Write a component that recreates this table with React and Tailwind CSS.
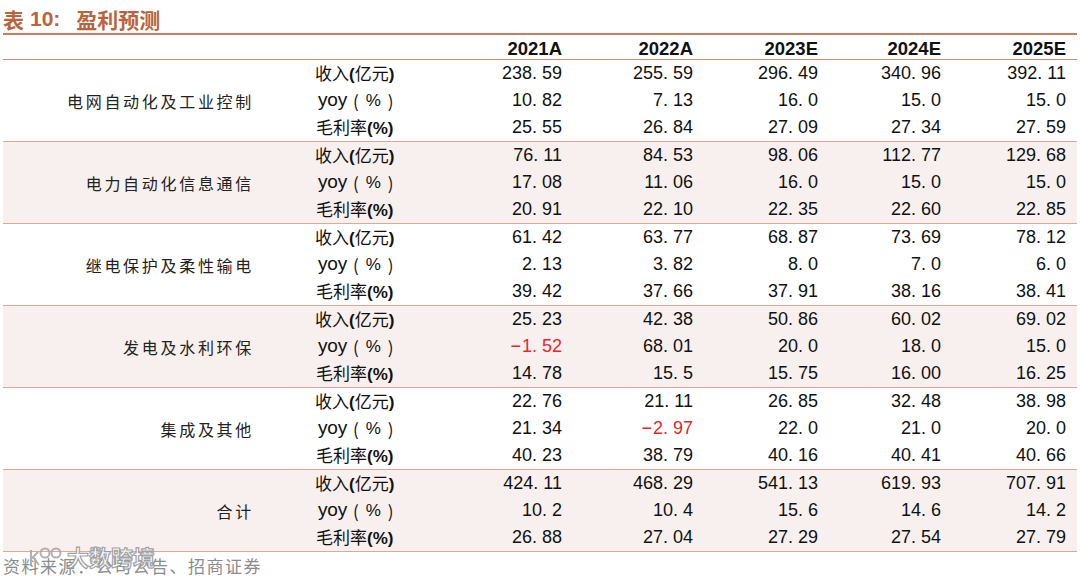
import React from "react";

const groups = [
  {
    name: "电网自动化及工业控制",
    shade: false,
    rows: [
      ["238.59", "255.59", "296.49", "340.96", "392.11"],
      ["10.82", "7.13", "16.0", "15.0", "15.0"],
      ["25.55", "26.84", "27.09", "27.34", "27.59"],
    ],
  },
  {
    name: "电力自动化信息通信",
    shade: true,
    rows: [
      ["76.11", "84.53", "98.06", "112.77", "129.68"],
      ["17.08", "11.06", "16.0", "15.0", "15.0"],
      ["20.91", "22.10", "22.35", "22.60", "22.85"],
    ],
  },
  {
    name: "继电保护及柔性输电",
    shade: false,
    rows: [
      ["61.42", "63.77", "68.87", "73.69", "78.12"],
      ["2.13", "3.82", "8.0", "7.0", "6.0"],
      ["39.42", "37.66", "37.91", "38.16", "38.41"],
    ],
  },
  {
    name: "发电及水利环保",
    shade: true,
    rows: [
      ["25.23", "42.38", "50.86", "60.02", "69.02"],
      ["-1.52", "68.01", "20.0", "18.0", "15.0"],
      ["14.78", "15.5", "15.75", "16.00", "16.25"],
    ],
  },
  {
    name: "集成及其他",
    shade: false,
    rows: [
      ["22.76", "21.11", "26.85", "32.48", "38.98"],
      ["21.34", "-2.97", "22.0", "21.0", "20.0"],
      ["40.23", "38.79", "40.16", "40.41", "40.66"],
    ],
  },
  {
    name: "合计",
    shade: true,
    rows: [
      ["424.11", "468.29", "541.13", "619.93", "707.91"],
      ["10.2", "10.4", "15.6", "14.6", "14.2"],
      ["26.88", "27.04", "27.29", "27.54", "27.79"],
    ],
  },
];

const years = ["2021A", "2022A", "2023E", "2024E", "2025E"];

const cols =
  "grid grid-cols-[249px_148px_162px_131px_125px_123px_125px_1fr]";

const cjk = "font-['Noto_Sans_CJK_SC',sans-serif]";
const latin = "font-['Liberation_Sans','Noto_Sans_CJK_SC',sans-serif]";

// "238.59" is printed with a wide gap after the point
const Num = ({ v }) => {
  const neg = v.startsWith("-");
  const [a, b] = v.replace("-", "").split(".");
  return (
    <span className={neg ? "text-[#e8262b]" : "text-[#111]"}>
      {neg && <span className="mr-[1px]">−</span>}
      {a}
      <span className="inline-block w-[10px] text-left">.</span>
      {b}
    </span>
  );
};

const Metric = ({ i }) => {
  if (i === 0)
    return (
      <span className={`${cjk} text-[17px]`}>
        收入<span className={`${latin} font-bold`}>(</span>亿元
        <span className={`${latin} font-bold`}>)</span>
      </span>
    );
  if (i === 1)
    return (
      <span className="pl-[3px] flex items-center">
        <span className={`${latin} text-[19px] tracking-[-0.2px]`}>yoy</span>
        <span className={`${cjk} text-[17px] ml-[6px]`}>(</span>
        <span className={`${latin} text-[17px] mx-[7px]`}>%</span>
        <span className={`${cjk} text-[17px]`}>)</span>
      </span>
    );
  return (
    <span className={`${cjk} text-[17px] pl-[1px]`}>
      毛利率<span className={`${latin} font-bold`}>(%)</span>
    </span>
  );
};

export default function App() {
  return (
    <div className="relative w-[1080px] h-[579px] bg-white text-[#111] overflow-hidden">
      {/* title */}
      <div className="px-[3px] pt-[4px]">
        <div
          className={`${cjk} h-[29px] text-[21px] font-bold text-[#b8643c] leading-[28px] flex items-center`}
        >
          <span>表</span>
          <span className={`${latin} ml-[6px]`}>10:</span>
          <span className="ml-[16px]">盈利预测</span>
        </div>
        <div className="h-[2px] bg-[#c47f60]" />
      </div>

      {/* table */}
      <div className="mx-[3px]">
        <div className={`${cols} h-[25px] border-b border-[#c8907a] items-center`}>
          <div />
          <div />
          {years.map((y) => (
            <div
              key={y}
              className={`${latin} text-right text-[18.5px] font-bold`}
            >
              {y}
            </div>
          ))}
          <div />
        </div>

        {groups.map((g) => (
          <div
            key={g.name}
            className={`${cols} border-b border-[#d8ab98] ${g.shade ? "bg-[#f7f0ee]" : "bg-white"}`}
          >
            <div
              className={`${cjk} row-span-3 flex items-center justify-end text-[16px] tracking-[2.7px] text-[#222] -mr-[2px]`}
            >
              {g.name}
            </div>
            {g.rows.map((r, i) => (
              <React.Fragment key={i}>
                <div className="col-start-2 h-[27px] flex items-center pl-[63px] text-[#111]">
                  <Metric i={i} />
                </div>
                {r.map((v, j) => (
                  <div
                    key={j}
                    className={`${latin} h-[27px] flex items-center justify-end text-[18px]`}
                  >
                    <Num v={v} />
                  </div>
                ))}
                <div />
              </React.Fragment>
            ))}
          </div>
        ))}
      </div>

      {/* source */}
      <div
        className={`${cjk} px-[3px] pt-[1px] text-[17px] tracking-[1.5px] text-[#8c8c8c] leading-[26px]`}
      >
        资料来源：公司公告、招商证券
      </div>

      {/* watermark */}
      <div className="absolute left-[28px] top-[545px] flex items-center gap-[3px] opacity-90">
        <svg width="36" height="22" viewBox="0 0 36 22" fill="none" stroke="#a9a9a9" strokeWidth="2">
          <path d="M3 5v15M3 14l7-7M5 12l6 8" />
          <circle cx="17" cy="8" r="4.5" />
          <circle cx="28" cy="8" r="4.5" />
        </svg>
        <span
          className={`${cjk} text-[22px] font-bold text-white [-webkit-text-stroke:1.2px_#9a9a9a] leading-none`}
        >
          大数跨境
        </span>
      </div>
    </div>
  );
}
